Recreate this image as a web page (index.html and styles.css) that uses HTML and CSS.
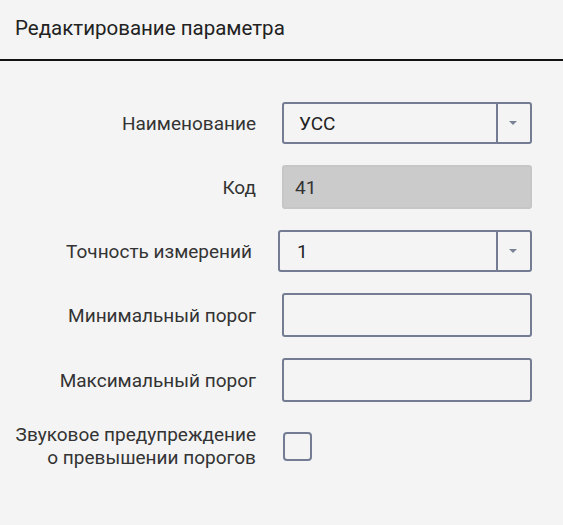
FILE: index.html
```html
<!DOCTYPE html>
<html lang="ru">
<head>
<meta charset="utf-8">
<title>Редактирование параметра</title>
<link rel="stylesheet" href="styles.css">
</head>
<body>
<div class="dialog">
  <div class="header">Редактирование параметра</div>
  <div class="form">
    <div class="row">
      <div class="label">Наименование</div>
      <div class="field select">
        <div class="value">УСС</div>
        <div class="toggle"><span class="arrow"></span></div>
      </div>
    </div>
    <div class="row">
      <div class="label">Код</div>
      <div class="field input disabled"><div class="value">41</div></div>
    </div>
    <div class="row row-wide">
      <div class="label">Точность измерений</div>
      <div class="field select">
        <div class="value">1</div>
        <div class="toggle"><span class="arrow"></span></div>
      </div>
    </div>
    <div class="row">
      <div class="label">Минимальный порог</div>
      <div class="field input"><div class="value"></div></div>
    </div>
    <div class="row">
      <div class="label">Максимальный порог</div>
      <div class="field input"><div class="value"></div></div>
    </div>
    <div class="row row-check">
      <div class="label">Звуковое предупреждение<br>о превышении порогов</div>
      <div class="checkbox"></div>
    </div>
  </div>
</div>
</body>
</html>
```

FILE: styles.css
```css
html, body {
  margin: 0;
  padding: 0;
  background: #f4f4f4;
}
body {
  font-family: Roboto, "Liberation Sans", Arial, sans-serif;
  color: #2b2b2b;
  width: 563px;
  height: 525px;
  overflow: hidden;
}
.header {
  box-sizing: border-box;
  height: 61px;
  padding: 16px 0 0 15px;
  font-size: 20.5px;
  line-height: 24px;
  color: #222;
  border-bottom: 2px solid #111;
}
.form {
  padding-top: 41px;
  display: flex;
  flex-direction: column;
  gap: 21px;
}
.row {
  display: flex;
  align-items: center;
  gap: 26px;
}
.label {
  width: 256px;
  text-align: right;
  font-size: 19px;
  line-height: 23px;
  color: #333;
}
.field {
  box-sizing: border-box;
  width: 250px;
  border: 2px solid #737c93;
  border-radius: 3px;
  display: flex;
  align-items: stretch;
}
.select {
  height: 42px;
}
.input {
  height: 44px;
}
.row-wide .label {
  width: 252px;
}
.row-wide .field {
  width: 254px;
}
.value {
  flex: 1;
  display: flex;
  align-items: center;
  padding-left: 15px;
  font-size: 19px;
  color: #222;
}
.row-wide .value {
  padding-left: 17px;
}
.disabled {
  background: #cbcbcb;
  border-color: #c6c6c6;
}
.disabled .value {
  padding-left: 11px;
  color: #333;
}
.toggle {
  width: 32px;
  border-left: 2px solid #737c93;
  display: flex;
  align-items: center;
  justify-content: center;
}
.arrow {
  width: 0;
  height: 0;
  border-left: 4.5px solid transparent;
  border-right: 4.5px solid transparent;
  border-top: 4px solid #7a8296;
  margin-left: -2px;
}
.row-check {
  min-height: 46px;
}
.checkbox {
  box-sizing: border-box;
  width: 29px;
  height: 29px;
  border: 2px solid #737c93;
  border-radius: 4px;
  margin-left: 1px;
}
```
